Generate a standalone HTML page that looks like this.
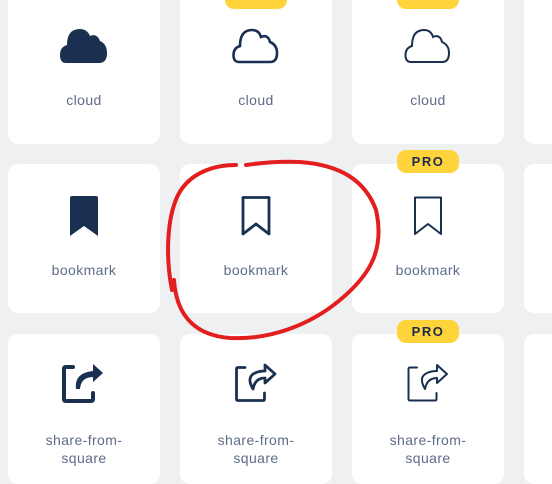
<!DOCTYPE html><html><head><style>
body{margin:0;width:552px;height:468px;background:#eff0f2;position:relative;overflow:hidden;font-family:"Liberation Sans",sans-serif}
.c{position:absolute;width:152px;background:#fff;border-radius:10px}
.l{position:absolute;width:152px;text-align:center;color:#5f6b8a;font-size:14px;line-height:18px;letter-spacing:0.4px}
.b{position:absolute;width:62px;height:23px;background:#ffd43b;border-radius:9px;font-weight:bold;font-size:13px;letter-spacing:1.5px;text-align:center;line-height:23px;color:#1a2b4c}
svg.i{position:absolute}
</style></head><body>
<div class="c" style="left:8px;top:-12px;height:156px"></div>
<div class="c" style="left:180px;top:-12px;height:156px"></div>
<div class="c" style="left:352px;top:-12px;height:156px"></div>
<div class="c" style="left:524px;top:-12px;height:156px"></div>
<div class="c" style="left:8px;top:164px;height:149px"></div>
<div class="c" style="left:180px;top:164px;height:149px"></div>
<div class="c" style="left:352px;top:164px;height:149px"></div>
<div class="c" style="left:524px;top:164px;height:149px"></div>
<div class="c" style="left:8px;top:334px;height:150px"></div>
<div class="c" style="left:180px;top:334px;height:150px"></div>
<div class="c" style="left:352px;top:334px;height:150px"></div>
<div class="c" style="left:524px;top:334px;height:150px"></div>
<div class="b" style="left:225px;top:-14px"></div>
<div class="b" style="left:397px;top:-14px"></div>
<div class="b" style="left:397px;top:150px">PRO</div>
<div class="b" style="left:397px;top:320px">PRO</div>

<svg class="i" style="left:59px;top:28px" width="50" height="36" viewBox="0 0 48 36"><path d="M6 35 Q0 35 0 27 Q0 19 7 17 Q7 1 20 1 Q27 1 30 8 Q37 5 40 13 Q47 16 47 25 Q47 35 39 35Z" fill="#1a3050"/></svg>
<svg class="i" style="left:231px;top:28px" width="50" height="36" viewBox="0 0 48 36"><path d="M7 34 Q1.5 34 1.5 27 Q1.5 20 8 18 Q8 2 20 2 Q27 2 29 9 Q36 6 38 14 Q45 17 45 25 Q45 34 38 34Z" fill="none" stroke="#1a3050" stroke-width="2.6"/></svg>
<svg class="i" style="left:403px;top:28px" width="50" height="36" viewBox="0 0 48 36"><path d="M7 34 Q1.5 34 1.5 27 Q1.5 20 8 18 Q8 2 20 2 Q27 2 29 9 Q36 6 38 14 Q45 17 45 25 Q45 34 38 34Z" fill="none" stroke="#1a3050" stroke-width="2"/></svg>

<svg class="i" style="left:68px;top:195px" width="32" height="42" viewBox="0 0 32 42"><path d="M2 3 Q2 1 4 1 H28 Q30 1 30 3 V41 L16 31 L2 41Z" fill="#1a3050"/></svg>
<svg class="i" style="left:240px;top:195px" width="32" height="42" viewBox="0 0 32 42"><path d="M3 2.5 H29 V39 L16 29 L3 39Z" fill="none" stroke="#1a3050" stroke-width="2.8" stroke-linejoin="round"/></svg>
<svg class="i" style="left:412px;top:195px" width="32" height="42" viewBox="0 0 32 42"><path d="M3 2.5 H29 V39 L16 29 L3 39Z" fill="none" stroke="#1a3050" stroke-width="2" stroke-linejoin="round"/></svg>

<svg class="i" style="left:61px;top:363px" width="46" height="42" viewBox="0 0 46 42"><path d="M12 4 H5 Q3 4 3 6 V36 Q3 38 5 38 H30 Q32 38 32 36 V30" fill="none" stroke="#1a3050" stroke-width="4" stroke-linecap="round"/><path d="M32 1 L42 10 L32 19 V14 Q20 14 19 26 L15 26 Q13 10 32 8Z" fill="#1a3050"/></svg>
<svg class="i" style="left:233px;top:363px" width="46" height="42" viewBox="0 0 46 42"><path d="M12 4.5 H5 Q3.5 4.5 3.5 6 V36 Q3.5 37.5 5 37.5 H30 Q31.5 37.5 31.5 36 V30" fill="none" stroke="#1a3050" stroke-width="2.8" stroke-linecap="round"/><path d="M32 2 L42 11 L32 20 V15 Q22 15 20 26 Q13 14 22 10 Q26 8 32 8Z" fill="none" stroke="#1a3050" stroke-width="2.8" stroke-linejoin="round"/></svg>
<svg class="i" style="left:405px;top:363px" width="46" height="42" viewBox="0 0 46 42"><path d="M12 4.5 H5 Q3.5 4.5 3.5 6 V36 Q3.5 37.5 5 37.5 H30 Q31.5 37.5 31.5 36 V30" fill="none" stroke="#1a3050" stroke-width="2" stroke-linecap="round"/><path d="M32 2 L42 11 L32 20 V15 Q22 15 20 26 Q13 14 22 10 Q26 8 32 8Z" fill="none" stroke="#1a3050" stroke-width="2" stroke-linejoin="round"/></svg>

<div class="l" style="left:8px;top:91px">cloud</div>
<div class="l" style="left:180px;top:91px">cloud</div>
<div class="l" style="left:352px;top:91px">cloud</div>
<div class="l" style="left:8px;top:261px">bookmark</div>
<div class="l" style="left:180px;top:261px">bookmark</div>
<div class="l" style="left:352px;top:261px">bookmark</div>
<div class="l" style="left:8px;top:431px">share-from-<br>square</div>
<div class="l" style="left:180px;top:431px">share-from-<br>square</div>
<div class="l" style="left:352px;top:431px">share-from-<br>square</div>

<svg style="position:absolute;left:0;top:0" width="552" height="468"><path d="M236 165 C215 165 190 172 178 195 C166 220 166 260 172 290 M174 280 C176 310 190 335 230 338 C270 340 310 325 340 300 C370 275 385 250 376 210 C365 180 340 165 300 162 C280 161 260 163 246 165" fill="none" stroke="#e31e1e" stroke-width="4" stroke-linecap="round"/></svg>
</body></html>
